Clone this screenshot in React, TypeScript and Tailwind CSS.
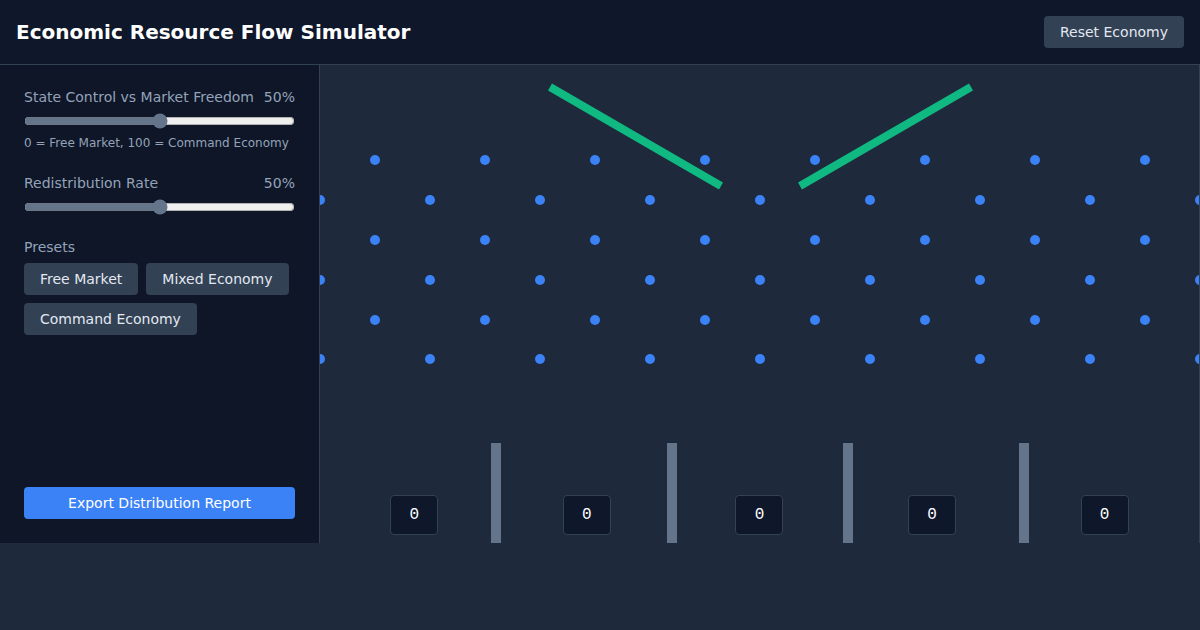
import { useState } from "react";

const W = 879;
const H = 478;

function Board() {
  const pegs: { x: number; y: number }[] = [];
  for (let r = 0; r < 6; r++) {
    const y = 95 + r * 40 - (r === 5 ? 1 : 0);
    const offset = r % 2 === 0 ? 55 : 0;
    for (let x = offset; x <= W + 5; x += 110) pegs.push({ x, y });
  }
  const dividers = [171, 347, 523, 699];

  return (
    <svg width={W} height={H} className="block">
      {pegs.map((p, i) => (
        <circle key={i} cx={p.x} cy={p.y} r={5} fill="#3b82f6" />
      ))}
      {/* paddles */}
      <line x1={230} y1={22} x2={401} y2={121} stroke="#10b981" strokeWidth={8} />
      <line x1={480} y1={121} x2={651} y2={22} stroke="#10b981" strokeWidth={8} />
      {dividers.map((x) => (
        <rect key={x} x={x} y={378} width={10} height={100} fill="#64748b" />
      ))}
    </svg>
  );
}

export default function App() {
  const [control, setControl] = useState(50);
  const [redistribution, setRedistribution] = useState(50);
  const bins = [0, 0, 0, 0, 0];

  return (
    <div
      className="min-h-[630px] bg-[#1e293b] text-[#e2e8f0]"
      style={{ fontFamily: '"DejaVu Sans", "Noto Sans", sans-serif' }}
    >
      <header className="h-[65px] px-4 flex items-center justify-between bg-[#0f172a] border-b border-[#334155]">
        <h1 className="text-xl font-bold text-white">Economic Resource Flow Simulator</h1>
        <button className="px-4 py-1.5 rounded bg-[#334155] text-sm text-[#e2e8f0]">
          Reset Economy
        </button>
      </header>

      <div className="flex h-[478px]">
        {/* Controls */}
        <aside className="w-80 shrink-0 px-6 pt-[22px] pb-6 flex flex-col bg-[#0e1628] border-r border-[#334155]">
          <div>
            <div className="flex justify-between text-sm text-[#94a3b8]">
              <span>State Control vs Market Freedom</span>
              <span>{control}%</span>
            </div>
            <input
              type="range"
              min={0}
              max={100}
              value={control}
              onChange={(e) => setControl(Number(e.target.value))}
              className="w-full mt-1.5 accent-[#64748b] block"
            />
            <p className="mt-1.5 text-xs text-[#94a3b8]">0 = Free Market, 100 = Command Economy</p>
          </div>

          <div className="mt-[22px]">
            <div className="flex justify-between text-sm text-[#94a3b8]">
              <span>Redistribution Rate</span>
              <span>{redistribution}%</span>
            </div>
            <input
              type="range"
              min={0}
              max={100}
              value={redistribution}
              onChange={(e) => setRedistribution(Number(e.target.value))}
              className="w-full mt-1.5 accent-[#64748b] block"
            />
          </div>

          <div className="mt-[22px]">
            <div className="text-sm text-[#94a3b8] mb-1.5">Presets</div>
            <div className="flex flex-wrap gap-2">
              {["Free Market", "Mixed Economy", "Command Economy"].map((p) => (
                <button key={p} className="px-4 py-1.5 rounded bg-[#334155] text-sm text-[#e2e8f0]">
                  {p}
                </button>
              ))}
            </div>
          </div>

          <button className="mt-auto w-full py-1.5 rounded bg-[#3b82f6] text-sm text-white">
            Export Distribution Report
          </button>
        </aside>

        {/* Simulation */}
        <main className="relative flex-1 bg-[#1e293b] border-r border-[#334155]">
          <Board />
          <div className="absolute left-2 right-2 bottom-2 flex justify-around">
            {bins.map((n, i) => (
              <div
                key={i}
                className="w-12 h-10 flex items-center justify-center rounded bg-[#0f172a] border border-[#334155] text-white"
                style={{ fontFamily: '"Liberation Mono", monospace' }}
              >
                {n}
              </div>
            ))}
          </div>
        </main>
      </div>
    </div>
  );
}
